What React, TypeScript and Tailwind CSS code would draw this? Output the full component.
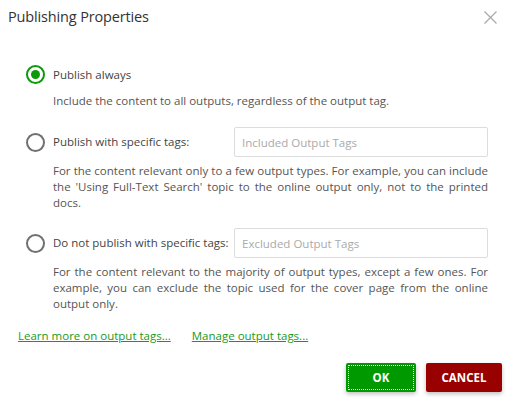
import React, { useState } from 'react';

type Mode = 'always' | 'include' | 'exclude';

const Radio = ({ checked, onClick }: { checked: boolean; onClick: () => void }) => (
  <button
    type="button"
    onClick={onClick}
    className={
      checked
        ? 'w-[19px] h-[19px] shrink-0 rounded-full border-2 border-[#0a9a0a] flex items-center justify-center'
        : 'w-[19px] h-[19px] shrink-0 rounded-full border-2 border-[#707070] flex items-center justify-center'
    }
  >
    {checked && <span className="w-[9px] h-[9px] rounded-full bg-[#0a9a0a]" />}
  </button>
);

export default function App() {
  const [mode, setMode] = useState<Mode>('always');
  const [included, setIncluded] = useState('');
  const [excluded, setExcluded] = useState('');

  return (
    <div
      className="w-[509px] h-[410px] bg-white flex flex-col text-[11.5px] text-[#444]"
      style={{ fontFamily: '"Open Sans", "Noto Sans", sans-serif' }}
    >
      {/* Header */}
      <div className="h-[34px] flex items-center justify-between pl-2 pr-[12px]">
        <h1 className="text-[14.5px] tracking-[-0.15px] text-[#333] leading-6">Publishing Properties</h1>
        <button type="button" className="text-[#aaa]">
          <svg width="13" height="13" viewBox="0 0 13 13" fill="none" stroke="currentColor" strokeWidth="1.3">
            <path d="M0.5 0.5L12.5 12.5M12.5 0.5L0.5 12.5" />
          </svg>
        </button>
      </div>

      <div className="pl-[26px] pr-[21px] mt-[31px]">
        {/* Publish always */}
        <div className="flex items-center gap-[8px] h-[19px]">
          <Radio checked={mode === 'always'} onClick={() => setMode('always')} />
          <span>Publish always</span>
        </div>
        <p className="ml-[27px] mt-[9px] leading-4 text-[#555]">
          Include the content to all outputs, regardless of the output tag.
        </p>

        {/* Publish with specific tags */}
        <div className="flex items-center mt-[18px] h-[30px]">
          <div className="flex items-center gap-[8px] w-[208px]">
            <Radio checked={mode === 'include'} onClick={() => setMode('include')} />
            <span>Publish with specific tags:</span>
          </div>
          <input
            value={included}
            onChange={(e) => setIncluded(e.target.value)}
            placeholder="Included Output Tags"
            className="flex-1 h-[30px] border border-[#dcdcdc] rounded-[2px] px-[7px] outline-none placeholder:text-[#aaa]"
          />
        </div>
        <p className="ml-[27px] mt-[6px] leading-4 text-justify text-[#555]">
          For the content relevant only to a few output types. For example, you can include the 'Using
          Full-Text Search' topic to the online output only, not to the printed docs.
        </p>

        {/* Do not publish with specific tags */}
        <div className="flex items-center mt-[17px] h-[30px]">
          <div className="flex items-center gap-[8px] w-[208px]">
            <Radio checked={mode === 'exclude'} onClick={() => setMode('exclude')} />
            <span className="whitespace-nowrap">Do not publish with specific tags:</span>
          </div>
          <input
            value={excluded}
            onChange={(e) => setExcluded(e.target.value)}
            placeholder="Excluded Output Tags"
            className="flex-1 h-[30px] border border-[#dcdcdc] rounded-[2px] px-[7px] outline-none placeholder:text-[#aaa]"
          />
        </div>
        <p className="ml-[27px] mt-[6px] leading-4 text-justify text-[#555]">
          For the content relevant to the majority of output types, except a few ones. For example, you
          can exclude the topic used for the cover page from the online output only.
        </p>
      </div>

      {/* Links */}
      <div className="flex gap-[21px] pl-[18px] mt-[16px] leading-4 text-[#1a9a1a]">
        <a href="#" className="underline">Learn more on output tags...</a>
        <a href="#" className="underline">Manage output tags...</a>
      </div>

      {/* Buttons */}
      <div className="flex justify-end gap-[10px] pr-[7px] mt-[19px]">
        <button
          type="button"
          className="w-[70px] h-[29px] bg-[#009a00] text-white font-bold rounded-[2px] shadow-[0_2px_4px_rgba(0,0,0,0.25)] outline-1 outline-dotted outline-white -outline-offset-[3px]"
        >
          OK
        </button>
        <button
          type="button"
          className="w-[76px] h-[29px] bg-[#990000] text-white font-bold rounded-[2px] shadow-[0_2px_4px_rgba(0,0,0,0.25)]"
        >
          CANCEL
        </button>
      </div>
    </div>
  );
}
